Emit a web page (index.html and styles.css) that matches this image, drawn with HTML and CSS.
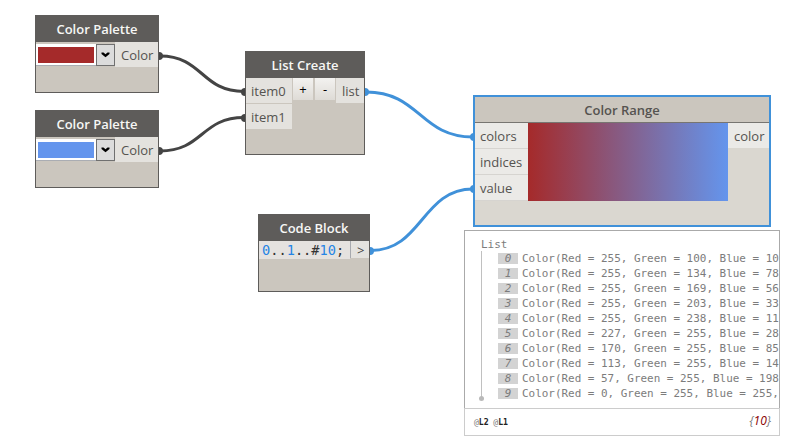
FILE: index.html
```html
<!DOCTYPE html>
<html lang="en">
<head>
<meta charset="utf-8">
<title>Node graph</title>
<link rel="stylesheet" href="styles.css">
</head>
<body>
<main class="canvas">
  <svg class="wires" width="806" height="448" viewBox="0 0 806 448">
    <g class="wire dark">
      <path d="M160 56C203 56 201 91.500 244 91.500"/>
      <path d="M160 151C203 151 201 117.500 244 117.500"/>
    </g>
    <g class="wire blue">
      <path d="M366 92C420 92 420 137 473 137"/>
      <path d="M371 250.500C422 250.500 422 189 473 189"/>
    </g>
    <g class="dot dark">
      <circle cx="159" cy="56" r="4"/><circle cx="159" cy="151" r="4"/>
      <circle cx="245" cy="92" r="4"/><circle cx="245" cy="118" r="4"/>
    </g>
    <g class="dot blue">
      <circle cx="365" cy="92" r="4"/><circle cx="370" cy="251" r="4"/>
      <circle cx="474" cy="137" r="4"/><circle cx="474" cy="189" r="4"/>
    </g>
  </svg>

  <section class="node palette palette-red">
    <h2>Color Palette</h2>
    <div class="row">
      <div class="picker"><span class="swatch red"></span><span class="drop"><svg width="9" height="6" viewBox="0 0 9 6"><path d="M.5 .5H2.500L4.500 2.200 6.500 .5H8.500V2L4.500 5.200 .5 2Z"/></svg></span></div>
      <span class="port">Color</span>
    </div>
  </section>

  <section class="node palette palette-blue">
    <h2>Color Palette</h2>
    <div class="row">
      <div class="picker"><span class="swatch sky"></span><span class="drop"><svg width="9" height="6" viewBox="0 0 9 6"><path d="M.5 .5H2.500L4.500 2.200 6.500 .5H8.500V2L4.500 5.200 .5 2Z"/></svg></span></div>
      <span class="port">Color</span>
    </div>
  </section>

  <section class="node list-create">
    <h2>List Create</h2>
    <div class="row">
      <div class="ports"><span class="port">item0</span><span class="port">item1</span></div>
      <div class="buttons"><span>+</span><span>-</span></div>
      <span class="port">list</span>
    </div>
  </section>

  <section class="node code-block">
    <h2>Code Block</h2>
    <div class="row">
      <code><b>0</b>..<b>1</b>..#<b>10</b>;</code>
      <span class="port out">&gt;</span>
    </div>
  </section>

  <section class="node color-range">
    <h2>Color Range</h2>
    <div class="row">
      <div class="ports"><span class="port">colors</span><span class="port">indices</span><span class="port">value</span></div>
      <div class="gradient"></div>
      <span class="port">color</span>
    </div>
  </section>

  <section class="preview">
    <div class="tree">
      <div class="title">List</div>
      <ol>
        <li><i>0</i>Color(Red = 255, Green = 100, Blue = 10</li>
        <li><i>1</i>Color(Red = 255, Green = 134, Blue = 78</li>
        <li><i>2</i>Color(Red = 255, Green = 169, Blue = 56</li>
        <li><i>3</i>Color(Red = 255, Green = 203, Blue = 33</li>
        <li><i>4</i>Color(Red = 255, Green = 238, Blue = 11</li>
        <li><i>5</i>Color(Red = 227, Green = 255, Blue = 28</li>
        <li><i>6</i>Color(Red = 170, Green = 255, Blue = 85</li>
        <li><i>7</i>Color(Red = 113, Green = 255, Blue = 14</li>
        <li><i>8</i>Color(Red = 57, Green = 255, Blue = 198</li>
        <li><i>9</i>Color(Red = 0, Green = 255, Blue = 255,</li>
      </ol>
    </div>
    <footer>
      <span class="levels">@<b>L2</b> @<b>L1</b></span>
      <span class="count">{<b>10</b>}</span>
    </footer>
  </section>
</main>
</body>
</html>
```
FILE: styles.css
```css
* { box-sizing: border-box; }
body { margin: 0; background: #fff; font-family: "Open Sans", sans-serif; }
.canvas { position: relative; width: 806px; height: 448px; overflow: hidden; }
.wires { position: absolute; left: 0; top: 0; }
.wire { fill: none; stroke-width: 3; }
.wire.dark { stroke: #444; }
.wire.blue { stroke: #4091d9; }
.dot.dark { fill: #444; }
.dot.blue { fill: #4091d9; }

.node { position: absolute; background: #cbc6be; border: 1px solid #5e5c5a; }
.node h2 {
  margin: 0; height: 26px; line-height: 27px; text-align: center;
  font-size: 13px; font-weight: 600; color: #f7f7f5; background: #5e5c5a;
}
.row { display: flex; align-items: flex-start; }
.port {
  display: block; height: 25px; line-height: 26px; padding-left: 5px;
  font-size: 13px; color: #555350; background: #e4e2de; white-space: nowrap;
}
.ports { display: flex; flex-direction: column; gap: 1px; }

.palette { width: 124px; height: 78px; left: 35px; }
.palette-red { top: 15px; }
.palette-blue { top: 110px; }
.palette .port { width: 43px; padding-left: 6px; }
.picker { display: flex; width: 79px; margin-top: 2px; height: 22px; }
.swatch {
  width: 60px; height: 21px; border: 2px solid #fff; border-top-width: 3px;
  box-shadow: 0 1px #aaadb3;
}
.swatch.red { background: #a52a2a; }
.swatch.sky { background: #6495ed; }
.drop {
  width: 19px; height: 22px; border: 1px solid #707070; background: #dcdcdc;
  display: flex; align-items: center; justify-content: center;
}

.list-create { left: 245px; top: 51px; width: 120px; height: 104px; }
.list-create .ports { width: 46px; }
.list-create .row > .port { width: 28px; padding-left: 6px; }
.buttons { display: flex; gap: 2px; width: 44px; padding: 0 1px; }
.buttons span {
  width: 20px; height: 22px; line-height: 23px; text-align: center;
  font-size: 13px; color: #000; background: linear-gradient(#f3f2f0, #dedbd6);
}

.code-block { left: 258px; top: 214px; width: 112px; height: 78px; }
.code-block code {
  width: 91px; height: 18px; padding-left: 3px; line-height: 19px; white-space: nowrap;
  font-family: "DejaVu Sans Mono", monospace; font-size: 13.65px; color: #333; background: #e5e2df;
}
.code-block b { font-weight: 400; color: #2585e5; }
.code-block .out {
  width: 19px; height: 17px; line-height: 18px; padding-left: 6px;
  font-size: 13px; color: #444; border-left: 1px solid #a7a9ae;
}

.color-range { left: 473px; top: 95px; width: 298px; height: 132px; background: #dad7d0; border: 2px solid #4091d9; }
.color-range h2 { color: #555350; background: #cbc6be; border-bottom: 1px solid #777571; line-height: 27px; }
.color-range .ports { width: 53px; background: #d6d4d0; padding-bottom: 1px; }
.color-range .port { background: #ebeae7; }
.color-range .row > .port { width: 41px; padding-left: 6px; }
.gradient { width: 200px; height: 78px; background: linear-gradient(90deg, #a52a2a, #6495ed); }

.preview {
  position: absolute; left: 464px; top: 230px; width: 316px; height: 206px; background: #fff;
  font-family: "DejaVu Sans Mono", monospace; font-size: 10.95px; color: #7c7c7c;
}
.tree { height: 178px; padding: 5px 0 0 16px; border: 1px solid #aaa; border-bottom: 0; }
.title { height: 15px; line-height: 18px; }
.tree ol {
  position: relative; list-style: none; margin: 0; padding: 0 0 0 16px;
  height: 148px; border-left: 1px solid #c0c0c0;
}
.tree ol::after {
  content: ""; position: absolute; left: -3px; bottom: -2px;
  width: 5px; height: 5px; border-radius: 50%; background: #b9b9b9;
}
.tree li { display: flex; align-items: center; height: 15px; white-space: pre; }
.tree i {
  flex: none; width: 20px; height: 11px; line-height: 12px;
  margin: 0 4px 1px 0; text-align: center; background: #d3d3d3;
}
.preview footer {
  display: flex; justify-content: space-between; align-items: center;
  height: 28px; padding: 0 8px 0 9px; border: 1px solid #ccc;
}
.levels { font-size: 8.2px; letter-spacing: -.1px; }
.levels b { color: #222; }
.count { font: italic 12px/16px "Open Sans", sans-serif; margin-bottom: 3px; }
.count b { color: #8b0000; font-weight: 400; }
```
